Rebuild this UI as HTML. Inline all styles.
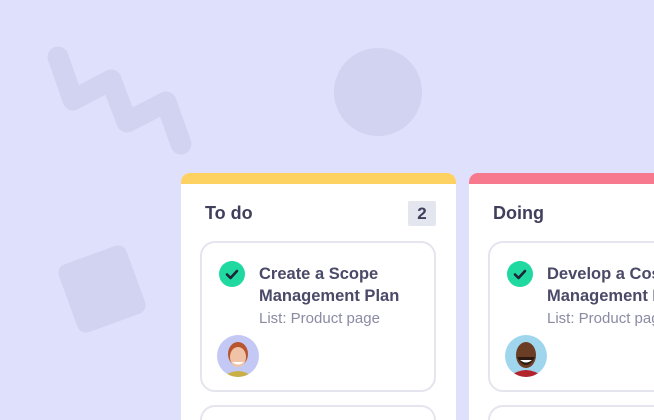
<!DOCTYPE html>
<html style="overflow:hidden;height:420px"><head><style>
body{margin:0;width:654px;height:420px;overflow:hidden;background:#dfe0fb;font-family:"Liberation Sans",sans-serif;position:relative}
.col{position:absolute;top:173px;width:275px;height:247px;background:#fff;border-radius:9px 9px 0 0;overflow:hidden}
.bar{height:11px}
.h{position:absolute;left:24px;top:30px;font-size:18px;font-weight:bold;color:#3f3f5c}
.badge{position:absolute;left:227px;top:28px;width:28px;height:25px;background:#e4e6ef;color:#3f3f5c;font-weight:bold;font-size:17px;text-align:center;line-height:25px;border-radius:2px}
.card{position:absolute;left:19px;top:68px;width:232px;height:147px;border:2px solid #e4e5ee;border-radius:15px;background:#fff}
.card2{top:232px}
.chk{position:absolute;left:17px;top:18px;width:26px;height:26px;border-radius:50%;background:#1fd9a0}
.t{position:absolute;left:57px;top:20px;font-size:16.5px;font-weight:bold;color:#4a4a68;line-height:22px;white-space:nowrap}
.l{font-size:15px;font-weight:normal;color:#8a8aa3}
.av{position:absolute;left:15px;top:92px;width:42px;height:42px;border-radius:50%;overflow:hidden}
</style></head><body>
<svg width="654" height="420" style="position:absolute;left:0;top:0">
<polyline points="58,57 73,100 111,80 127,122 166,102 181,144" fill="none" stroke="#d1d3f1" stroke-width="21" stroke-linecap="round" stroke-linejoin="round"/>
<circle cx="378" cy="92" r="44" fill="#d1d3f1"/>
<rect x="66" y="253" width="72" height="72" rx="9" fill="#d1d3f1" transform="rotate(-20 102 289)"/>
</svg>
<div class="col" style="left:181px">
<div class="bar" style="background:#fdd262"></div>
<div class="h">To do</div><div class="badge">2</div>
<div class="card">
<div class="chk"><svg width="26" height="26"><path d="M8 13.5l3.5 3.5 6.5-7" fill="none" stroke="#1f2438" stroke-width="2.6" stroke-linecap="round" stroke-linejoin="round"/></svg></div>
<div class="t">Create a Scope<br>Management Plan<br><span class="l">List: Product page</span></div>
<div class="av"><svg width="42" height="42"><rect width="42" height="42" fill="#c3c8f4"/><path d="M6 42q15-12 30 0z" fill="#c8b046"/><ellipse cx="21" cy="19" rx="10" ry="12" fill="#b9552e"/><ellipse cx="21" cy="22" rx="8" ry="10" fill="#f0c3a6"/><path d="M15 27q6 5 12 0" fill="#fff"/></svg></div>
</div>
<div class="card card2"></div>
</div>
<div class="col" style="left:469px;width:200px">
<div class="bar" style="background:#f6798e"></div>
<div class="h">Doing</div>
<div class="card" style="width:240px">
<div class="chk"><svg width="26" height="26"><path d="M8 13.5l3.5 3.5 6.5-7" fill="none" stroke="#1f2438" stroke-width="2.6" stroke-linecap="round" stroke-linejoin="round"/></svg></div>
<div class="t">Develop a Cost<br>Management Plan<br><span class="l">List: Product page</span></div>
<div class="av"><svg width="42" height="42"><rect width="42" height="42" fill="#9fd6ee"/><path d="M4 42q17-14 34 0z" fill="#b3232c"/><ellipse cx="21" cy="20" rx="10" ry="13" fill="#6b3d24"/><path d="M12 22q9 16 18 0" fill="#2b1a12"/><path d="M15 25q6 5 12 0" fill="#fff"/></svg></div>
</div>
<div class="card card2" style="width:240px"></div>
</div>
</body></html>
